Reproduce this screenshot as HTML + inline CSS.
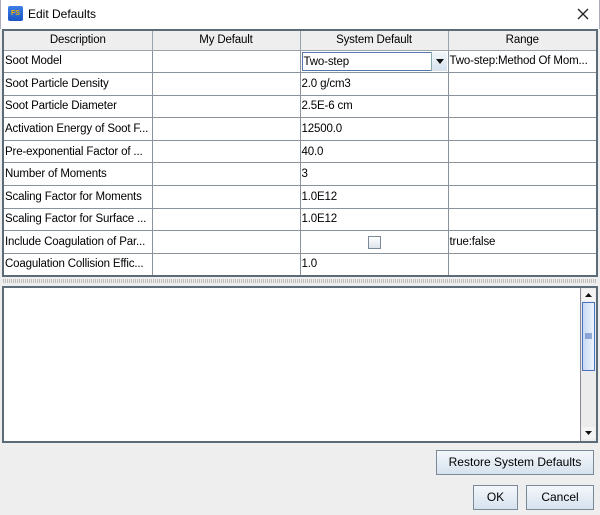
<!DOCTYPE html><html><head><style>
*{box-sizing:border-box;margin:0;padding:0}
body{width:600px;height:515px;background:#eeeeee;font-family:"Liberation Sans",sans-serif;font-size:12px;position:relative;overflow:hidden;color:#000}
.a{position:absolute}
.title{left:0;top:0;width:600px;height:29px;background:#fff;border-left:1px solid #aab;border-right:1px solid #aab}
table{position:absolute;left:2px;top:29px;width:596px;border-collapse:collapse;border:2px solid #5c6b78;background:#fff;table-layout:fixed}
td,th{border:1px solid #8a939b;height:22.6px;padding:0 1px;white-space:nowrap;overflow:hidden;font-weight:normal;font-size:11.5px;letter-spacing:-0.15px}
th{background:#eeeeee;height:20px;text-align:center;border-color:#9aa2aa}
.btn{position:absolute;border:1px solid #7a8a99;background:linear-gradient(#f3f7fb,#d6e2ee);text-align:center;line-height:22px;font-size:12px}
</style></head><body>
<div class="a title"></div>
<div class="a" style="left:8px;top:6px;width:15px;height:15px;background:linear-gradient(#3d7ee8,#1b56c4);border-radius:2px;color:#f6b400;font-size:7px;font-weight:bold;line-height:15px;text-align:center">FS</div>
<div class="a" style="left:28px;top:7px;font-size:12px">Edit Defaults</div>
<svg class="a" style="left:576px;top:7px" width="14" height="14"><path d="M2 2L12 12M12 2L2 12" stroke="#222" stroke-width="1.3"/></svg>
<table>
<colgroup><col style="width:149px"><col style="width:148px"><col style="width:148px"><col></colgroup>
<tr><th>Description</th><th>My Default</th><th>System Default</th><th>Range</th></tr>
<tr><td>Soot Model</td><td></td><td style="padding:0;position:relative"><div style="position:absolute;left:1px;top:1px;right:1px;bottom:1px;border:1px solid #5577aa;padding-left:1px;line-height:18px">Two-step</div><div style="position:absolute;right:1px;top:1px;bottom:1px;width:16px;background:linear-gradient(#f3f7fb,#d6e2ee);border-left:1px solid #8aa"><svg width="16" height="19"><path d="M4 7h8l-4 5z" fill="#111"/></svg></div></td><td>Two-step:Method Of Mom...</td></tr>
<tr><td>Soot Particle Density</td><td></td><td>2.0 g/cm3</td><td></td></tr>
<tr><td>Soot Particle Diameter</td><td></td><td>2.5E-6 cm</td><td></td></tr>
<tr><td>Activation Energy of Soot F...</td><td></td><td>12500.0</td><td></td></tr>
<tr><td>Pre-exponential Factor of ...</td><td></td><td>40.0</td><td></td></tr>
<tr><td>Number of Moments</td><td></td><td>3</td><td></td></tr>
<tr><td>Scaling Factor for Moments</td><td></td><td>1.0E12</td><td></td></tr>
<tr><td>Scaling Factor for Surface ...</td><td></td><td>1.0E12</td><td></td></tr>
<tr><td>Include Coagulation of Par...</td><td></td><td style="text-align:center"><span style="display:inline-block;width:13px;height:13px;border:1px solid #7a8a99;background:linear-gradient(#fff,#dde4ec);vertical-align:middle"></span></td><td>true:false</td></tr>
<tr><td>Coagulation Collision Effic...</td><td></td><td>1.0</td><td></td></tr>
</table>
<div class="a" style="left:3px;top:279px;width:594px;height:4px;background:repeating-linear-gradient(90deg,#bbb 0 1px,#eee 1px 2px)"></div>
<div class="a" style="left:2px;top:286px;width:596px;height:157px;border:2px solid #5c6b78;background:#fff"></div>
<div class="a" style="left:580px;top:288px;width:16px;height:153px;background:#ececec;border-left:1px solid #889"></div>
<div class="a" style="left:582px;top:289px;width:13px;height:12px;background:#f4f4f4"><svg width="13" height="12"><path d="M3 8h7l-3.5-4z" fill="#111"/></svg></div>
<div class="a" style="left:582px;top:302px;width:13px;height:69px;border:1px solid #4b72c0;background:linear-gradient(90deg,#c7d9f3,#eef4fc)"><svg width="11" height="67"><path d="M2 31h7M2 33h7M2 35h7" stroke="#3c64b4"/></svg></div>
<div class="a" style="left:582px;top:427px;width:13px;height:12px;background:#f4f4f4"><svg width="13" height="12"><path d="M3 4h7l-3.5 4z" fill="#111"/></svg></div>
<div class="btn" style="left:436px;top:450px;width:158px;height:25px">Restore System Defaults</div>
<div class="btn" style="left:473px;top:485px;width:45px;height:25px">OK</div>
<div class="btn" style="left:526px;top:485px;width:68px;height:25px">Cancel</div>
</body></html>
